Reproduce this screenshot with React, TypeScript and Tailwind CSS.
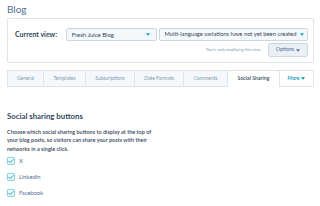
const tabs = [
  { label: 'General', w: 'w-[36px]' },
  { label: 'Templates', w: 'w-[42px]' },
  { label: 'Subscriptions', w: 'w-[49px]' },
  { label: 'Date Formats', w: 'w-[49px]' },
  { label: 'Comments', w: 'w-[44px]' },
];

function Caret({ className = '' }: { className?: string }) {
  return (
    <svg viewBox="0 0 6 4" className={`w-[4px] h-[3px] ${className}`}>
      <path d="M0 0h6L3 4z" fill="currentColor" />
    </svg>
  );
}

function Checkbox({ label }: { label: string }) {
  return (
    <label className="flex items-center gap-[4px] h-[16px]">
      <span className="w-[8px] h-[8px] rounded-[1.5px] border border-[#7fd1de] bg-[#eef9fb] flex items-center justify-center">
        <svg viewBox="0 0 10 10" className="w-[6px] h-[6px]">
          <path d="M1.5 5.2l2.3 2.3L8.6 2.6" fill="none" stroke="#0091ae" strokeWidth="1.4" strokeLinecap="round" strokeLinejoin="round" />
        </svg>
      </span>
      <span className="text-[5.8px] text-[#516f90]">{label}</span>
    </label>
  );
}

export default function App() {
  return (
    <div className="w-[320px] h-[206px] bg-white overflow-hidden px-[7px] text-[#33475b]" style={{ fontFamily: 'Lato, "Noto Sans", sans-serif' }}>
      <h1 className="text-[10px] leading-[12px] text-[#516f90] pt-[3px] h-[18px]">Blog</h1>

      {/* Current view panel */}
      <div className="w-[307px] border border-[#dfe3eb] rounded-[2px] pt-[9px] pb-[5px] pl-[7px] pr-[5px]">
        <div className="flex items-center">
          <span className="text-[7px] font-bold w-[51px]">Current view:</span>
          <div className="w-[91px] h-[13px] bg-[#f5f8fa] border border-[#cbd6e2] rounded-[2px] flex items-center justify-between pl-[5px] pr-[6px]">
            <span className="text-[6px] text-[#33475b]">Fresh Juice Blog</span>
            <Caret className="text-[#00a4bd]" />
          </div>
          <div className="ml-[2px] w-[150px] h-[13px] bg-[#f5f8fa] border border-[#cbd6e2] rounded-[2px] flex items-center justify-between pl-[5px] pr-[3px]">
            <span className="text-[5.8px] text-[#33475b] whitespace-nowrap">Multi-language variations have not yet been created</span>
            <Caret className="text-[#00a4bd]" />
          </div>
        </div>
        <div className="flex items-center justify-end mt-[2px]">
          <span className="text-[4px] text-[#7c98b6] mr-[7px]">You're only modifying this view.</span>
          <button className="w-[40px] h-[14px] bg-[#eaf0f6] border border-[#cbd6e2] rounded-[2px] flex items-center justify-center gap-[2px] text-[5.2px] text-[#506e91]">
            Options
            <Caret className="w-[3px] h-[2px] text-[#506e91]" />
          </button>
        </div>
      </div>

      {/* Tabs */}
      <div className="flex mt-[7px] h-[17px] w-[307px]">
        {tabs.map((t) => (
          <div key={t.label} className={`${t.w} bg-[#f5f8fa] border border-r-0 border-[#dfe3eb] flex items-center justify-center text-[5px] text-[#7c98b6] whitespace-nowrap`}>
            {t.label}
          </div>
        ))}
        <div className="w-[52px] bg-white border-t border-l border-[#dfe3eb] flex items-center justify-center text-[5.2px] font-semibold text-[#33475b]">
          Social Sharing
        </div>
        <div className="w-[35px] bg-white border border-[#dfe3eb] flex items-center justify-center gap-[2px] text-[5px] font-semibold text-[#0091ae]">
          More
          <Caret className="w-[3px] h-[2px]" />
        </div>
      </div>

      {/* Social sharing */}
      <h2 className="mt-[24px] text-[7.8px] leading-[10px] font-bold">Social sharing buttons</h2>
      <p className="mt-[7px] w-[152px] text-[5.5px] leading-[8.3px] font-semibold text-[#33475b]">
        Choose which social sharing buttons to display at the top of your blog posts, so visitors can share your posts with their networks in a single click.
      </p>
      <div className="flex flex-col">
        <Checkbox label="X" />
        <Checkbox label="LinkedIn" />
        <Checkbox label="Facebook" />
      </div>
    </div>
  );
}
